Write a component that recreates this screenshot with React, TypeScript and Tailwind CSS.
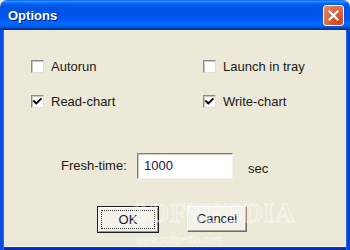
import React from "react";

const font = { fontFamily: '"Liberation Sans", Arial, sans-serif' };

function Check({ checked }: { checked?: boolean }) {
  return (
    <span className="relative inline-block w-[13px] h-[13px] shrink-0 bg-white border border-t-[#8c8c8c] border-l-[#8c8c8c] border-b-[#e2e0d6] border-r-[#e2e0d6] shadow-[inset_1px_1px_0_#c9c7bd]">
      {checked && (
        <svg width="13" height="13" viewBox="0 0 13 13" className="absolute left-[-1px] top-[-1px]">
          <path d="M3 6.2 L5.3 8.5 L9.8 4" stroke="#000" strokeWidth="1.9" fill="none" strokeLinecap="square" />
        </svg>
      )}
    </span>
  );
}

function CheckRow({ label, checked }: { label: string; checked?: boolean }) {
  return (
    <div className="flex items-center h-[13px] gap-[7px]">
      <Check checked={checked} />
      <span className="text-[13px] leading-[15px] text-[#1a1a1a] whitespace-nowrap">{label}</span>
    </div>
  );
}

export default function App() {
  return (
    <div className="w-[350px] h-[250px] flex flex-col overflow-hidden bg-[#ece9d8]" style={font}>
      <div className="h-[30px] shrink-0 rounded-t-[7px] flex items-center justify-between pl-[8px] pr-[6px] bg-[linear-gradient(to_bottom,#0058ee_0%,#3a93ff_4%,#288eff_6%,#127dff_8%,#036ffc_10%,#0262ee_14%,#0057e5_20%,#0054e3_24%,#0055eb_56%,#005bf5_66%,#026afe_76%,#0062ef_86%,#0052d6_92%,#0040ab_94%,#003092_100%)]">
        <span className="text-white font-bold text-[13px] leading-none [text-shadow:1px_1px_0_#0a1883]">Options</span>
        <div className="w-[21px] h-[21px] rounded-[3px] border border-white flex items-center justify-center bg-[radial-gradient(circle_at_75%_80%,#cc4418_0%,#df6a46_55%,#e98a6e_100%)]">
          <svg width="13" height="13" viewBox="0 0 13 13">
            <path d="M2.5 2.5 L10.5 10.5 M10.5 2.5 L2.5 10.5" stroke="#fff" strokeWidth="2.2" strokeLinecap="square" />
          </svg>
        </div>
      </div>
      <div className="flex-1 flex bg-[#0842d9]">
        <div className="w-[3px] bg-[#0b4be0]" />
        <div className="w-[1px] bg-[#1f6cf0]" />
        <div className="flex-1 flex flex-col">
          <div className="relative flex-1 flex flex-col bg-[#ece9d8] border-b border-[#f4f2ea]">
            <div className="pt-[30px] pl-[27px] grid grid-cols-[172px_1fr] gap-y-[22px]">
              <CheckRow label="Autorun" />
              <CheckRow label="Launch in tray" />
              <CheckRow label="Read-chart" checked />
              <CheckRow label="Write-chart" checked />
            </div>
            <div className="mt-[45px] ml-[57px] flex items-center h-[26px]">
              <span className="w-[76px] text-[13px] text-[#1a1a1a]">Fresh-time:</span>
              <div className="w-[96px] h-[26px] bg-white border border-t-[#7f7f7f] border-l-[#7f7f7f] border-b-[#f2f0e8] border-r-[#f2f0e8] shadow-[inset_1px_1px_0_#cfcdc3] pl-[6px] pt-[4px] text-[13px] leading-[15px] text-[#1a1a3a]">
                1000
              </div>
              <span className="ml-[15px] text-[13px] text-[#1a1a1a] mt-[5px]">sec</span>
            </div>
            <div className="mt-[27px] ml-[93px] flex gap-[28px]">
              <div className="w-[62px] h-[27px] border border-[#1e1e1e] bg-[#f3f1e9]">
                <div className="w-full h-full border border-t-white border-l-white border-b-[#9c9a8e] border-r-[#9c9a8e] p-[2px]">
                  <div className="w-full h-full border border-dotted border-[#333] flex items-center justify-center text-[13px] text-[#1a1a3a]">OK</div>
                </div>
              </div>
              <div className="w-[60px] h-[26px] border border-t-white border-l-white border-b-[#716f64] border-r-[#716f64] bg-[#f3f1e9] shadow-[inset_-1px_-1px_0_#aca899] flex items-center justify-center text-[13px] text-[#1a1a3a]">
                Cancel
              </div>
            </div>
            <div className="absolute left-[128px] top-[163px] text-[27px] font-bold tracking-[1px] text-transparent [-webkit-text-stroke:1px_rgba(255,255,255,0.55)] pointer-events-none" style={{ fontFamily: '"Liberation Serif", serif' }}>
              SOFTPEDIA
            </div>
            <div className="absolute left-[132px] top-[202px] text-[10px] text-[rgba(255,255,255,0.6)] pointer-events-none">
              www.softpedia.com
            </div>
          </div>
          <div className="h-[3px] bg-[linear-gradient(to_bottom,#0842d9,#001ea0)]" />
        </div>
        <div className="w-[1px] bg-[#1f6cf0]" />
        <div className="w-[3px] bg-[#0b3fd0]" />
      </div>
    </div>
  );
}
